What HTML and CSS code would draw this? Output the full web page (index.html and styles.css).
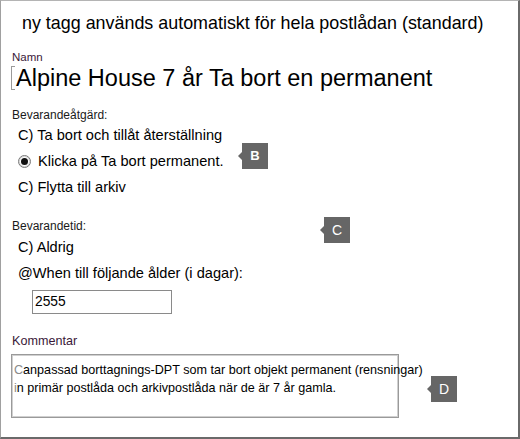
FILE: index.html
```html
<!DOCTYPE html>
<html lang="sv">
<head>
<meta charset="utf-8">
<title>Bevarandetagg</title>
<link rel="stylesheet" href="styles.css">
</head>
<body>
<div class="frame">
  <div class="title">ny tagg används automatiskt för hela postlådan (standard)</div>

  <div class="label label-name">Namn</div>
  <div class="name-row"><span class="bracket"></span><span class="name-text">Alpine House 7 år Ta bort en permanent</span></div>

  <div class="label label-action">Bevarandeåtgärd:</div>
  <div class="opt">C) Ta bort och tillåt återställning</div>
  <div class="opt"><span class="radio"><span class="dot"></span></span>Klicka på Ta bort permanent.</div>
  <div class="opt">C) Flytta till arkiv</div>

  <div class="label label-period">Bevarandetid:</div>
  <div class="opt opt-first">C) Aldrig</div>
  <div class="opt">@When till följande ålder (i dagar):</div>
  <div class="days">2555</div>

  <div class="label label-comment">Kommentar</div>
  <div class="comment">
    <div class="cline"><span class="faint">C</span>anpassad borttagnings-DPT som tar bort objekt permanent (rensningar)</div>
    <div class="cline"><span class="faint">i</span>n primär postlåda och arkivpostlåda när de är 7 år gamla.</div>
  </div>

  <div class="badge badge-b">B</div>
  <div class="badge badge-c">C</div>
  <div class="badge badge-d">D</div>
</div>
</body>
</html>
```

FILE: styles.css
```css
html, body {
  margin: 0;
  padding: 0;
  background: #ffffff;
}

.frame {
  position: relative;
  width: 520px;
  height: 439px;
  box-sizing: border-box;
  border-top: 1px solid #b4b4b4;
  border-left: 1px solid #a0a0a0;
  border-right: 2px solid #6a6a6a;
  border-bottom: 2px solid #6a6a6a;
  font-family: "Liberation Sans", Arial, sans-serif;
  color: #000;
  overflow: hidden;
}

.title {
  padding-top: 12px;
  margin-left: 21px;
  font-size: 17.9px;
  line-height: 20px;
  white-space: nowrap;
}

.label {
  margin-left: 11px;
  font-size: 12px;
  line-height: 14px;
  color: #1a1a1a;
  white-space: nowrap;
}

.label-name { margin-top: 17px; color: #3a1838; font-size: 11.5px; }
.label-action { margin-top: 17px; }
.label-period { margin-top: 19px; }
.label-comment { margin-top: 20px; font-size: 12.6px; color: #3a1838; }

.name-row {
  margin-top: 1px;
  margin-left: 10px;
  display: flex;
  align-items: center;
  height: 26px;
}

.bracket {
  width: 3px;
  height: 22px;
  border: 1px solid #9a9a9a;
  border-right: none;
  margin-right: 1px;
  flex: none;
}

.name-text {
  font-size: 23.5px;
  line-height: 26px;
  white-space: nowrap;
}

.opt {
  margin-left: 17px;
  height: 26px;
  line-height: 26px;
  font-size: 14.6px;
  display: flex;
  align-items: center;
  white-space: nowrap;
}

.opt-first { margin-top: 1px; }

.radio {
  width: 11px;
  height: 11px;
  border: 1px solid #7a7a7a;
  border-radius: 50%;
  display: flex;
  align-items: center;
  justify-content: center;
  margin-right: 7px;
  flex: none;
  box-shadow: inset 0 0 0 1px #d8d8d8;
}

.dot {
  width: 7px;
  height: 7px;
  border-radius: 50%;
  background: #111;
}

.days {
  margin-top: 4px;
  margin-left: 31px;
  width: 140px;
  height: 24px;
  box-sizing: border-box;
  border: 1px solid #8a8a8a;
  font-size: 13.8px;
  line-height: 22px;
  padding-left: 2px;
}

.comment {
  margin-top: 6px;
  margin-left: 10px;
  width: 388px;
  height: 64px;
  box-sizing: border-box;
  border: 1px solid #9a9a9a;
  box-shadow: inset 0 0 0 1px #d0d0d0;
  padding-top: 6px;
  padding-left: 2px;
  font-size: 12.6px;
  line-height: 18px;
  white-space: nowrap;
  overflow: visible;
}

.faint { color: #8a8a8a; }

.badge {
  position: absolute;
  width: 26px;
  height: 26px;
  background: #666666;
  color: #ffffff;
  font-size: 13px;
  line-height: 26px;
  text-align: center;
}

.badge::before {
  content: "";
  position: absolute;
  left: -4px;
  top: 9px;
  border-top: 4px solid transparent;
  border-bottom: 4px solid transparent;
  border-right: 4px solid #666666;
}

.badge-b { left: 241px; top: 142px; font-weight: bold; }
.badge-c { left: 323px; top: 216px; font-size: 14px; }
.badge-d { left: 430px; top: 375px; font-size: 14px; }
```
